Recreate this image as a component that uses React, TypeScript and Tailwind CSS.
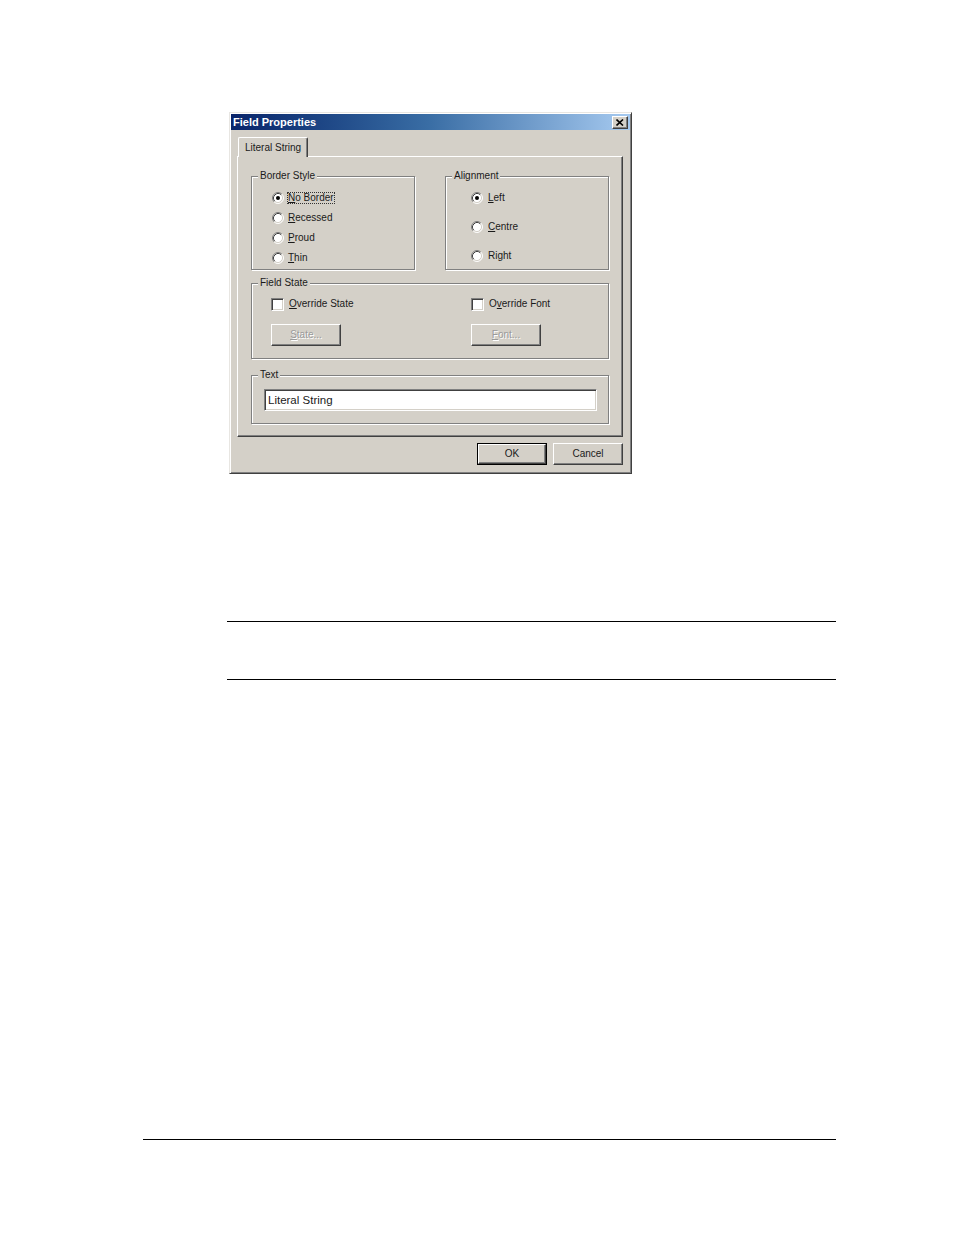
import React from "react";

const face = "bg-[#d4d0c8]";

function Radio({ checked }: { checked?: boolean }) {
  return (
    <svg width="12" height="12" viewBox="0 0 12 12" className="shrink-0">
      <circle cx="6" cy="6" r="5" fill="#fff" />
      <path d="M9.89 2.11 A5.5 5.5 0 0 0 2.11 9.89" stroke="#808080" fill="none" />
      <path d="M9.18 2.82 A4.5 4.5 0 0 0 2.82 9.18" stroke="#404040" fill="none" />
      <path d="M9.89 2.11 A5.5 5.5 0 0 1 2.11 9.89" stroke="#ffffff" fill="none" />
      <path d="M9.18 2.82 A4.5 4.5 0 0 1 2.82 9.18" stroke="#d4d0c8" fill="none" />
      {checked && <circle cx="6" cy="6" r="2" fill="#000" />}
    </svg>
  );
}

function Check() {
  return (
    <div className="w-[13px] h-[13px] shrink-0 bg-white border border-t-[#808080] border-l-[#808080] border-r-white border-b-white shadow-[inset_1px_1px_0_#404040,inset_-1px_-1px_0_#d4d0c8]" />
  );
}

function Label({ pre = "", u, post = "", focus }: { pre?: string; u: string; post?: string; focus?: boolean }) {
  return (
    <span
      className={
        focus
          ? "px-[1px] outline outline-1 outline-dotted outline-[#333] -outline-offset-1"
          : "px-[1px]"
      }
    >
      {pre}
      <span className="underline underline-offset-[1px]">{u}</span>
      {post}
    </span>
  );
}

function Group({
  title,
  className,
  children,
}: {
  title: string;
  className: string;
  children: React.ReactNode;
}) {
  return (
    <fieldset
      className={`border border-[#808080] shadow-[inset_1px_1px_0_#fff,1px_1px_0_#fff] ${className}`}
    >
      <legend className={`ml-[6px] px-[2px] leading-[12px] ${face}`}>{title}</legend>
      {children}
    </fieldset>
  );
}

function Btn({
  children,
  disabled,
  isDefault,
}: {
  children: React.ReactNode;
  disabled?: boolean;
  isDefault?: boolean;
}) {
  const inner = (
    <div
      className={`h-full w-full flex items-center justify-center border border-t-white border-l-white border-r-[#404040] border-b-[#404040] shadow-[inset_-1px_-1px_0_#808080] ${
        disabled ? "text-[#9a9a9a] [text-shadow:1px_1px_0_#fff]" : ""
      }`}
    >
      {children}
    </div>
  );
  return (
    <div className={`w-[70px] h-[22px] ${isDefault ? "border border-black" : ""}`}>{inner}</div>
  );
}

function Dialog() {
  return (
    <div
      className={`ml-[229px] w-[403px] h-[362px] ${face} border border-t-[#e8e6e2] border-l-[#e8e6e2] border-r-[#404040] border-b-[#404040] p-[1px] shadow-[inset_1px_1px_0_#fff,inset_-1px_-1px_0_#808080] flex flex-col text-[10px] leading-[12px] text-[#1a1a1a] [font-family:'Liberation_Sans',Arial,sans-serif]`}
    >
      {/* title bar */}
      <div className="h-[16px] flex items-center justify-between pl-[2px] pr-[2px] bg-gradient-to-r from-[#0a246a] via-[#3a6ea5] to-[#a6caf0]">
        <span className="text-white font-bold text-[11px] leading-[14px]">Field Properties</span>
        <div className="w-[16px] h-[13px] flex items-center justify-center bg-[#d4d0c8] border border-t-white border-l-white border-r-[#404040] border-b-[#404040] shadow-[inset_-1px_-1px_0_#808080]">
          <svg width="8" height="7" viewBox="0 0 8 7">
            <path d="M0.5 0.5 L7 6.5 M7 0.5 L0.5 6.5" stroke="#000" strokeWidth="1.6" />
          </svg>
        </div>
      </div>

      {/* tabs + panel */}
      <div className="pl-[6px] pr-[7px] pt-[7px]">
        <div className="flex">
          <div
            className={`relative z-10 -mb-px ml-[1px] h-[20px] px-[6px] flex items-center ${face} border border-b-0 border-t-white border-l-white border-r-[#404040] shadow-[inset_-1px_0_0_#808080] rounded-t-[2px]`}
          >
            Literal String
          </div>
        </div>
        <div
          className="h-[281px] border border-t-white border-l-white border-r-[#404040] border-b-[#404040] shadow-[inset_-1px_-1px_0_#808080] pt-[13px] px-[13px]"
        >
          <div className="grid grid-cols-2 gap-[30px]">
            <Group title="Border Style" className="h-[100px]">
              <div className="pt-[6px] pl-[20px]">
                <div className="h-[20px] flex items-center gap-[3px]">
                  <Radio checked />
                  <Label u="N" post="o Border" focus />
                </div>
                <div className="h-[20px] flex items-center gap-[3px]">
                  <Radio />
                  <Label u="R" post="ecessed" />
                </div>
                <div className="h-[20px] flex items-center gap-[3px]">
                  <Radio />
                  <Label u="P" post="roud" />
                </div>
                <div className="h-[20px] flex items-center gap-[3px]">
                  <Radio />
                  <Label u="T" post="hin" />
                </div>
              </div>
            </Group>
            <Group title="Alignment" className="h-[100px]">
              <div className="pt-[1px] pl-[25px]">
                <div className="h-[29px] flex items-center gap-[4px]">
                  <Radio checked />
                  <Label u="L" post="eft" />
                </div>
                <div className="h-[29px] flex items-center gap-[4px]">
                  <Radio />
                  <Label u="C" post="entre" />
                </div>
                <div className="h-[29px] flex items-center gap-[4px]">
                  <Radio />
                  <Label pre="Ri" u="g" post="ht" />
                </div>
              </div>
            </Group>
          </div>

          <Group title="Field State" className="mt-[7px] h-[82px]">
            <div className="pt-[7px] pl-[19px] flex">
              <div className="w-[200px]">
                <div className="h-[16px] flex items-center gap-[4px]">
                  <Check />
                  <Label u="O" post="verride State" />
                </div>
                <div className="mt-[12px]">
                  <Btn disabled>
                    <span>
                      <span className="underline">S</span>tate...
                    </span>
                  </Btn>
                </div>
              </div>
              <div>
                <div className="h-[16px] flex items-center gap-[4px]">
                  <Check />
                  <Label pre="O" u="v" post="erride Font" />
                </div>
                <div className="mt-[12px]">
                  <Btn disabled>
                    <span>
                      <span className="underline">F</span>ont...
                    </span>
                  </Btn>
                </div>
              </div>
            </div>
          </Group>

          <Group title="Text" className="mt-[10px] h-[55px]">
            <div className="pt-[8px] pl-[12px] pr-[11px]">
              <div className="h-[22px] bg-white border border-t-[#808080] border-l-[#808080] border-r-white border-b-white shadow-[inset_1px_1px_0_#404040,inset_-1px_-1px_0_#d4d0c8] flex items-center pl-[3px] text-[11.5px] leading-[14px]">
                Literal String
              </div>
            </div>
          </Group>
        </div>
      </div>

      {/* buttons */}
      <div className="mt-[6px] flex justify-end gap-[6px] pr-[7px]">
        <Btn isDefault>OK</Btn>
        <Btn>Cancel</Btn>
      </div>
    </div>
  );
}

export default function App() {
  return (
    <div className="w-[954px] h-[1235px] bg-white pt-[112px] overflow-hidden">
      <Dialog />
      <div className="mt-[147px] ml-[227px] w-[609px] h-[1px] bg-black" />
      <div className="mt-[57px] ml-[227px] w-[609px] h-[1px] bg-black" />
      <div className="mt-[459px] ml-[143px] w-[693px] h-[1px] bg-black" />
    </div>
  );
}
